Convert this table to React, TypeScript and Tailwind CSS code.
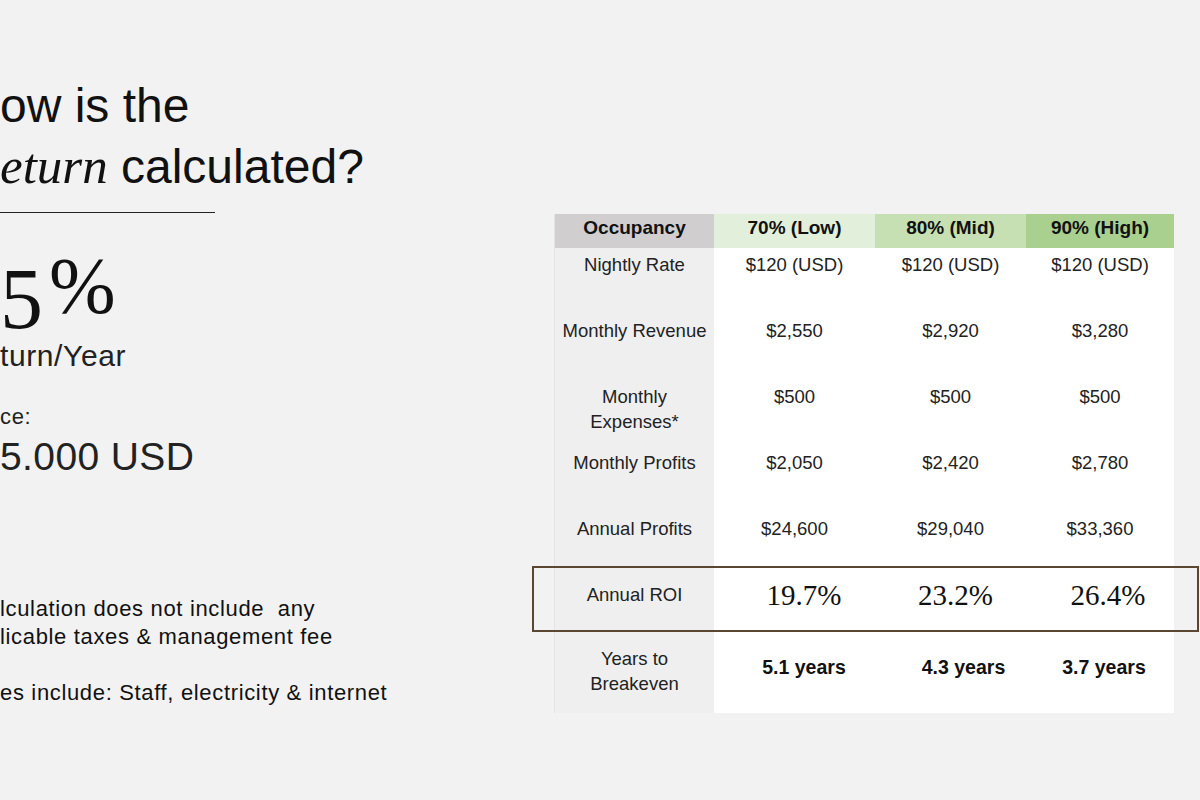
import React from "react";

const sans = "font-['Liberation_Sans',Arial,sans-serif]";
const serif = "font-['Liberation_Serif','Times_New_Roman',serif]";

const rows: { label: string[]; vals: string[] }[] = [
  { label: ["Nightly Rate"], vals: ["$120 (USD)", "$120 (USD)", "$120 (USD)"] },
  { label: ["Monthly Revenue"], vals: ["$2,550", "$2,920", "$3,280"] },
  { label: ["Monthly", "Expenses*"], vals: ["$500", "$500", "$500"] },
  { label: ["Monthly Profits"], vals: ["$2,050", "$2,420", "$2,780"] },
  { label: ["Annual Profits"], vals: ["$24,600", "$29,040", "$33,360"] },
];

function LabelCell({ lines, className = "" }: { lines: string[]; className?: string }) {
  return (
    <div className={`bg-[#efefef] text-center text-[18.5px] leading-[25px] text-[#222] ${className}`}>
      {lines.map((l) => (
        <div key={l}>{l}</div>
      ))}
    </div>
  );
}

export default function App() {
  return (
    <div className={`w-[1200px] h-[800px] bg-[#f2f2f2] flex overflow-hidden ${sans}`}>
      {/* Left side */}
      <div className="w-[554px] shrink-0 pt-[75px] text-[#111]">
        <div className="text-[48px] leading-[61px] h-[61px] whitespace-nowrap">ow is the</div>
        <div className="text-[48px] leading-[61px] h-[61px] whitespace-nowrap">
          <span className={`${serif} italic text-[51px]`}>eturn</span> calculated?
        </div>
        <div className="mt-[15px] h-px w-[215px] bg-[#222]" />
        <div className={`${serif} mt-[28px] h-[86px] text-[86px] leading-none whitespace-nowrap`}>
          <span className="align-[-15px]">5</span>
          <span className="ml-[6px] text-[80px]">%</span>
        </div>
        <div className="mt-[12px] text-[30px] leading-[34px] tracking-[0.02em] text-[#222]">turn/Year</div>
        <div className="mt-[31px] text-[22px] leading-[26px] tracking-[0.03em] text-[#222]">ce:</div>
        <div className="mt-[5px] text-[39px] leading-[44px] tracking-[0.01em] text-[#222]">5.000 USD</div>
        <div className="mt-[116px] text-[22px] leading-[28px] tracking-[0.03em] text-[#111] whitespace-pre">
          <div>lculation does not include  any</div>
          <div>licable taxes &amp; management fee</div>
          <div>&nbsp;</div>
          <div>es include: Staff, electricity &amp; internet</div>
        </div>
      </div>

      {/* Table */}
      <div className="pt-[214px]">
        <div className="relative">
          <div className="grid grid-cols-[159px_161px_151px_148px] text-[#222] border-l border-[#e4e4e4]">
            {/* header */}
            <div className="h-[34px] pt-[1px] bg-[#d0cece] text-center text-[19px] leading-[25px] font-bold text-[#111]">Occupancy</div>
            <div className="h-[34px] pt-[1px] bg-[#e2efda] text-center text-[19px] leading-[25px] font-bold text-[#111]">70% (Low)</div>
            <div className="h-[34px] pt-[1px] bg-[#c6e0b4] text-center text-[19px] leading-[25px] font-bold text-[#111]">80% (Mid)</div>
            <div className="h-[34px] pt-[1px] bg-[#a9d08e] text-center text-[19px] leading-[25px] font-bold text-[#111]">90% (High)</div>

            {rows.map((r) => (
              <React.Fragment key={r.label.join(" ")}>
                <LabelCell lines={r.label} className="h-[66px] pt-[4px]" />
                {r.vals.map((v, i) => (
                  <div key={i} className="h-[66px] pt-[4px] bg-white text-center text-[18.5px] leading-[25px]">
                    {v}
                  </div>
                ))}
              </React.Fragment>
            ))}

            {/* ROI row */}
            <LabelCell lines={["Annual ROI"]} className="h-[66px] pt-[4px]" />
            <div className={`h-[66px] pt-[5px] bg-white text-center pl-[19px] text-[29px] leading-[25px] text-[#111] ${serif}`}>19.7%</div>
            <div className={`h-[66px] pt-[5px] bg-white text-center pl-[10px] text-[29px] leading-[25px] text-[#111] ${serif}`}>23.2%</div>
            <div className={`h-[66px] pt-[5px] bg-white text-center pl-[16px] text-[29px] leading-[25px] text-[#111] ${serif}`}>26.4%</div>

            {/* Years row */}
            <LabelCell lines={["Years to", "Breakeven"]} className="h-[69px] pt-[2px]" />
            <div className="h-[69px] pt-[11px] pl-[19px] bg-white text-center text-[19.5px] leading-[25px] font-bold text-[#111]">5.1 years</div>
            <div className="h-[69px] pt-[11px] pl-[26px] bg-white text-center text-[19.5px] leading-[25px] font-bold text-[#111]">4.3 years</div>
            <div className="h-[69px] pt-[11px] pl-[8px] bg-white text-center text-[19.5px] leading-[25px] font-bold text-[#111]">3.7 years</div>
          </div>

          {/* ROI highlight box */}
          <div className="absolute left-[-22px] top-[352px] w-[667px] h-[66px] border-2 border-[#5b4631] pointer-events-none" />
        </div>
      </div>
    </div>
  );
}
